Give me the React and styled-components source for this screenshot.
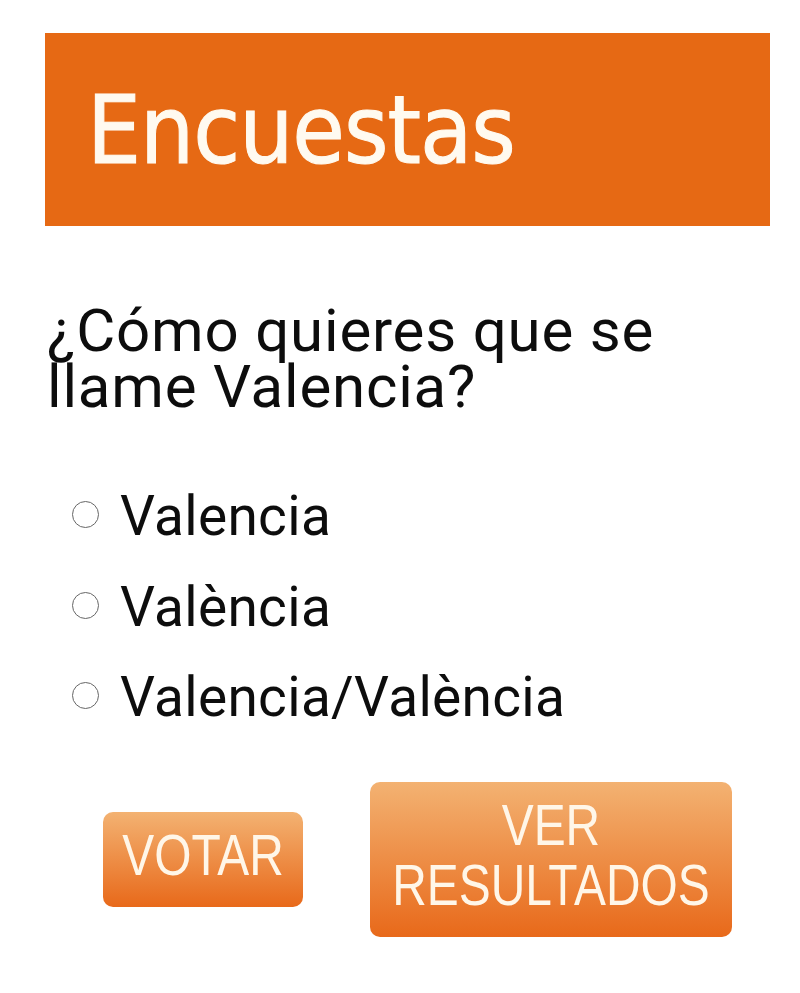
import React from "react";
import styled, { createGlobalStyle } from "styled-components";

const GlobalStyle = createGlobalStyle`
  html, body {
    margin: 0;
    padding: 0;
    background: #fff;
  }
`;

const options = ["Valencia", "València", "Valencia/València"];

const App = () => {
  return (
    <Widget>
      <GlobalStyle />
      <Header>
        <Title>Encuestas</Title>
      </Header>
      <Question>¿Cómo quieres que se llame Valencia?</Question>
      <OptionList>
        {options.map((o) => (
          <Option key={o}>
            <Radio />
            <OptionLabel>{o}</OptionLabel>
          </Option>
        ))}
      </OptionList>
      <ButtonRow>
        <Button small>
          <ButtonText>VOTAR</ButtonText>
        </Button>
        <Button>
          <ButtonText>
            VER
            <br />
            RESULTADOS
          </ButtonText>
        </Button>
      </ButtonRow>
    </Widget>
  );
};

export default App;

const Widget = styled.div`
  width: 725px;
  padding: 33px 0 0 45px;
  font-family: Roboto, "Liberation Sans", sans-serif;
  color: #111;
`;

const Header = styled.div`
  height: 193px;
  background: #e66914;
  display: flex;
  align-items: center;
  padding-left: 42px;
`;

const Title = styled.h1`
  margin: 0;
  font-family: "DejaVu Sans Condensed", "DejaVu Sans", sans-serif;
  font-weight: normal;
  font-size: 95px;
  color: #fffaf0;
  letter-spacing: -1px;
  -webkit-text-stroke: 1px #fffaf0;
`;

const Question = styled.p`
  margin: 77px 0 0 2px;
  width: 640px;
  font-size: 60px;
  line-height: 56px;
  letter-spacing: 0.8px;
  color: #0d0d0d;
`;

const OptionList = styled.div`
  margin: 56px 0 0 27px;
  display: flex;
  flex-direction: column;
`;

const Option = styled.label`
  display: flex;
  align-items: center;
  height: 90.5px;
`;

const Radio = styled.span`
  width: 25px;
  height: 25px;
  border: 1.5px solid #666;
  border-radius: 50%;
  background: #fff;
  margin-right: 21px;
  margin-top: -3px;
  flex-shrink: 0;
`;

const OptionLabel = styled.span`
  font-size: 55px;
  letter-spacing: 0.3px;
  color: #0d0d0d;
`;

const ButtonRow = styled.div`
  display: flex;
  align-items: center;
  gap: 67px;
  margin: 39px 0 0 58px;
`;

const Button = styled.button`
  display: flex;
  align-items: center;
  justify-content: center;
  border: none;
  border-radius: 10px;
  background: linear-gradient(#f3b272, #e8691a);
  color: #fff6e8;
  font-family: "Liberation Sans", Arial, sans-serif;
  font-size: 57px;
  line-height: 60px;
  width: ${({ small }) => (small ? "200px" : "362px")};
  height: ${({ small }) => (small ? "95px" : "155px")};
  padding: 0 0 8px;
  cursor: pointer;
`;

const ButtonText = styled.span`
  display: inline-block;
  white-space: nowrap;
  transform: scaleX(0.84);
`;
